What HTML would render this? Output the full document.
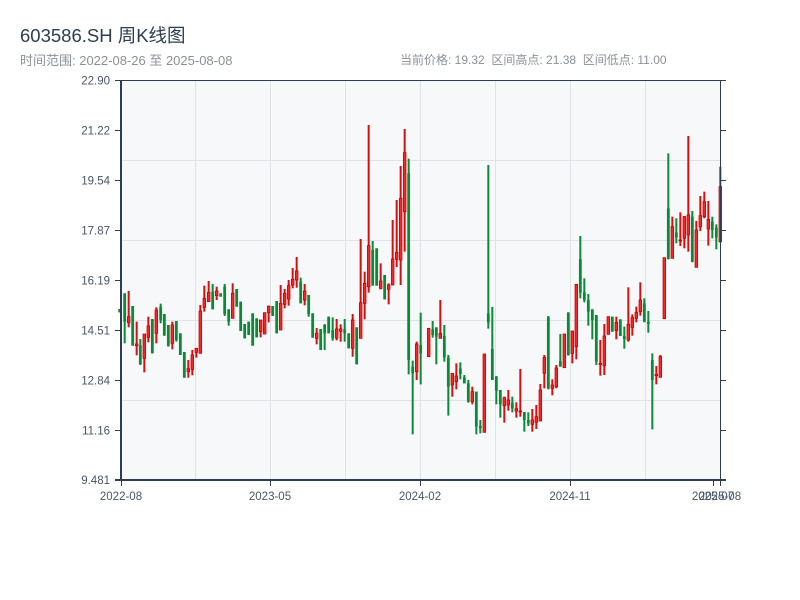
<!DOCTYPE html>
<html><head><meta charset="utf-8"><style>
body{margin:0;background:#fff;width:800px;height:600px;overflow:hidden;font-family:"Liberation Sans","Noto Sans CJK SC",sans-serif;}
.t{position:absolute;left:20px;top:22px;font-size:18.5px;color:#2c3e50;}
.s{position:absolute;top:51px;font-size:12px;color:#8a9099;}
</style></head><body>
<div class="t">603586.SH 周K线图</div>
<div class="s" style="left:20px;font-size:13px;top:50px">时间范围: 2022-08-26 至 2025-08-08</div>
<div class="s" style="left:400px">当前价格: 19.32&nbsp; 区间高点: 21.38&nbsp; 区间低点: 11.00</div>
<svg id="c" width="800" height="600" style="position:absolute;left:0;top:0" xmlns="http://www.w3.org/2000/svg">
<rect x="121" y="80" width="599" height="400" fill="#f7f8fa"/>
<g stroke="#dfe2e7" stroke-width="1">
<line x1="195.5" y1="80" x2="195.5" y2="480"/><line x1="270.5" y1="80" x2="270.5" y2="480"/><line x1="345.5" y1="80" x2="345.5" y2="480"/><line x1="420.5" y1="80" x2="420.5" y2="480"/><line x1="495.5" y1="80" x2="495.5" y2="480"/><line x1="570.5" y1="80" x2="570.5" y2="480"/><line x1="645.5" y1="80" x2="645.5" y2="480"/>
<line x1="121" y1="160.5" x2="720" y2="160.5"/><line x1="121" y1="240.5" x2="720" y2="240.5"/><line x1="121" y1="320.5" x2="720" y2="320.5"/><line x1="121" y1="400.5" x2="720" y2="400.5"/>
</g>
<g id="k"></g>
<g stroke="#2c3e50">
<line x1="121" y1="80.5" x2="726" y2="80.5" stroke-width="1"/>
<line x1="720.5" y1="80" x2="720.5" y2="480" stroke-width="1"/>
<line x1="121" y1="80" x2="121" y2="481" stroke-width="2"/>
<line x1="115" y1="480" x2="726" y2="480" stroke-width="2"/>
</g>
<g id="ax" stroke="#2c3e50" stroke-width="1"></g>
<g font-size="11.5" fill="#4a5568" font-family="Liberation Sans,sans-serif" id="lb"></g>
</svg>
<script>
var A=[[14,567,577,567,577,0],[29,520,605,520,670,0],[41,590,608,513,622,1],[53,558,677,558,677,0],[65,672,677,605,706,1],[76,676,732,657,735,0],[88,642,715,642,757,1],[100,618,652,590,667,1],[112,597,700,597,700,0],[124,570,640,562,670,1],[137,560,600,551,610,0],[148,582,645,582,648,0],[160,615,677,615,680,0],[172,615,670,605,688,1],[184,603,660,603,665,0],[196,640,705,640,705,0],[208,696,773,696,773,0],[220,746,755,720,773,1],[232,705,748,690,766,1],[244,685,697,685,713,1],[256,573,700,555,700,1],[268,535,562,497,575,1],[281,517,545,483,545,1],[293,515,568,492,568,0],[305,513,527,500,540,1],[317,520,530,520,530,0],[329,500,582,492,588,0],[341,568,605,568,617,0],[353,520,595,490,595,1],[365,507,560,507,560,0],[377,545,633,545,633,0],[389,612,655,612,655,0],[401,605,645,605,645,0],[413,580,677,580,677,0],[425,595,652,595,652,0],[437,600,635,600,652,1],[449,578,642,578,642,1],[461,558,578,558,607,1],[473,558,588,558,588,0],[485,543,640,543,640,0],[497,550,630,495,630,1],[509,520,553,507,565,1],[521,497,537,480,557,1],[533,478,495,444,505,1],[545,453,480,411,503,1],[557,485,550,473,550,0],[569,513,540,492,556,1],[581,525,582,525,590,0],[593,580,653,580,653,0],[605,640,655,624,673,1],[617,627,690,627,690,0],[629,615,640,612,690,0],[641,590,640,590,640,0],[653,630,655,592,662,0],[665,627,654,597,661,1],[677,627,634,613,665,1],[689,628,640,597,665,0],[701,640,685,640,685,0],[713,600,685,582,710,1],[725,622,733,622,733,0],[737,548,655,357,655,1],[749,490,550,455,598,1],[761,377,500,15,518,1],[773,390,497,363,497,0],[785,385,497,385,497,0],[797,483,505,430,508,1],[809,465,538,465,538,0],[821,495,508,490,553,1],[833,417,495,300,495,1],[845,397,418,240,441,1],[857,235,420,138,495,1],[869,98,275,27,395,1],[881,160,720,116,763,0],[893,740,760,722,943,0],[905,672,755,665,780,1],[917,675,700,578,793,0]];
var B=[[29,680,750,680,750,0],[41,625,710,625,710,1],[53,628,645,603,653,0],[64,622,650,622,733,0],[76,640,655,540,655,1],[88,648,712,615,725,0],[100,713,800,705,887,0],[112,760,795,760,830,1],[124,768,785,730,808,1],[136,745,762,727,778,0],[148,772,790,765,790,0],[160,790,845,780,848,0],[172,815,845,800,853,1],[184,815,920,815,943,0],[196,918,925,900,940,0],[208,702,937,702,937,1],[220,580,607,135,626,0],[232,687,780,561,780,0],[244,770,812,768,853,0],[256,810,853,810,893,0],[268,833,857,830,908,1],[280,840,855,810,872,1],[292,848,865,830,877,0],[304,866,873,847,893,1],[316,873,876,747,890,1],[328,876,900,876,935,0],[340,900,910,877,918,0],[352,900,913,867,935,1],[364,890,907,855,927,1],[376,810,903,792,903,1],[388,712,760,705,805,1],[400,592,805,588,808,0],[412,795,805,778,826,1],[424,744,800,735,805,1],[436,723,740,642,740,0],[448,642,743,642,743,1],[460,577,705,577,707,0],[472,633,700,633,730,1],[484,493,680,493,718,1],[496,418,518,348,535,0],[508,517,540,475,547,0],[520,540,575,522,617,0],[532,568,600,568,658,0],[544,585,725,585,735,0],[556,730,733,660,767,1],[568,648,737,612,765,1],[580,590,643,590,643,1],[592,590,635,590,635,0],[604,607,632,590,658,1],[616,598,648,598,648,0],[628,648,657,620,686,0],[640,613,660,502,665,1],[652,593,622,583,647,1],[664,577,595,560,607,1],[676,540,575,487,587,1],[688,550,605,535,607,0],[700,605,612,573,638,0],[712,720,780,700,928,0],[724,763,767,738,793,1],[736,710,772,705,772,1],[748,413,596,413,596,1],[760,265,417,100,418,0],[772,320,415,290,415,1],[784,337,352,295,370,0],[796,360,363,277,378,1],[808,290,355,288,385,1],[820,285,345,48,395,1],[832,290,425,273,427,0],[844,330,442,303,442,1],[856,287,320,228,333,1],[868,245,290,215,295,1],[880,298,327,243,377,1],[892,305,330,290,355,0],[904,323,352,313,388,0],[916,200,365,140,368,1]];
var s='';
function d(a,o){a.forEach(function(c){var x=o+c[0]/3,t=120+c[1]/3,b=120+c[2]/3,h=120+c[3]/3,l=120+c[4]/3;var col=c[5]?'#d40f0f':'#0a8a36';
s+='<line x1="'+x+'" y1="'+h+'" x2="'+x+'" y2="'+l+'" stroke="'+col+'" stroke-width="2"/>';
if(c[5])s+='<rect x="'+(x-1.3)+'" y="'+t+'" width="2.6" height="'+Math.max(1,b-t)+'" fill="#f02a2a" stroke="#cc0000" stroke-width="0.8"/>';
else s+='<rect x="'+(x-1.4)+'" y="'+t+'" width="2.8" height="'+Math.max(1,b-t)+'" fill="'+col+'"/>';});}
d(A,115);d(B.slice(1),415);
document.getElementById('k').innerHTML=s;
var ys=[[80.5,'22.90'],[130.5,'21.22'],[180.5,'19.54'],[230.5,'17.87'],[280.5,'16.19'],[330.5,'14.51'],[380.5,'12.84'],[430.5,'11.16'],[480,'9.481']];
var ax='',lb='';
ys.forEach(function(y){ax+='<line x1="115" y1="'+y[0]+'" x2="121" y2="'+y[0]+'"/><line x1="720" y1="'+y[0]+'" x2="726" y2="'+y[0]+'"/>';lb+='<text x="110" y="'+(y[0]+4)+'" text-anchor="end">'+y[1]+'</text>';});
[[121,'2022-08'],[270,'2023-05'],[420,'2024-02'],[570,'2024-11'],[713,'2025-07'],[720,'2025-08']].forEach(function(v){ax+='<line x1="'+(v[0]+.5)+'" y1="480" x2="'+(v[0]+.5)+'" y2="486"/>';lb+='<text x="'+v[0]+'" y="500" text-anchor="middle">'+v[1]+'</text>';});
document.getElementById('ax').innerHTML=ax;document.getElementById('lb').innerHTML=lb;
</script>
</body></html>
